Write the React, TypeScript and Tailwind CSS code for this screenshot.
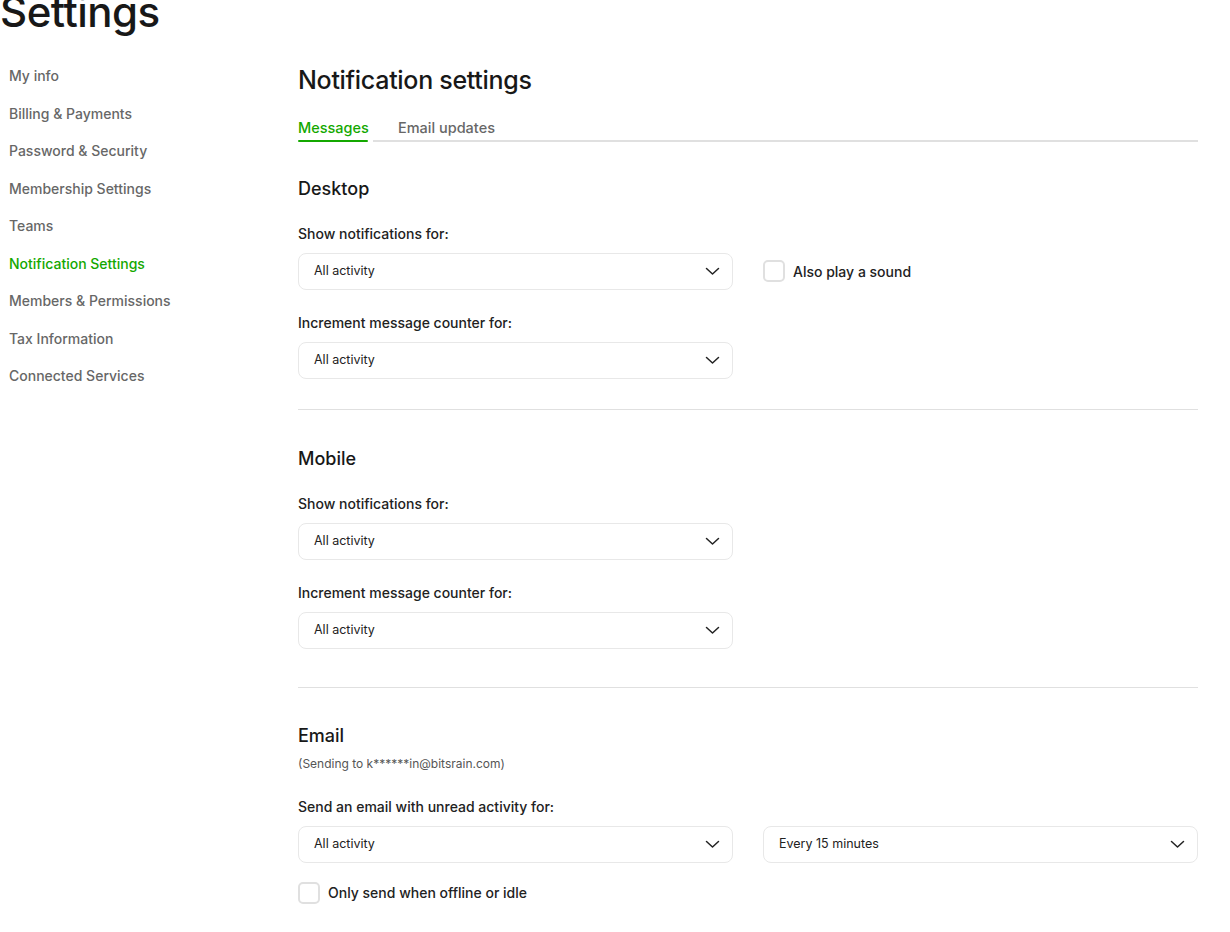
const NAV = [
    "My info",
    "Billing & Payments",
    "Password & Security",
    "Membership Settings",
    "Teams",
    "Notification Settings",
    "Members & Permissions",
    "Tax Information",
    "Connected Services",
];

function Chevron() {
    return (
        <svg width="15" height="9" viewBox="0 0 15 9" fill="none" className="text-[#222]">
            <path d="M1.5 1.5 L7.5 7 L13.5 1.5" stroke="currentColor" strokeWidth="1.5" strokeLinecap="round" strokeLinejoin="round" />
        </svg>
    );
}

function Select({ value, className = "" }: { value: string; className?: string }) {
    return (
        <div className={`flex h-[37px] items-center justify-between rounded-lg border border-[#e8e8e8] bg-white pl-[15px] pr-[12px] ${className}`}>
            <span className="text-[12.5px] text-[#222]">{value}</span>
            <Chevron />
        </div>
    );
}

function Checkbox({ label }: { label: string }) {
    return (
        <label className="flex items-center gap-2">
            <span className="h-[22px] w-[22px] rounded-[5px] border-2 border-[#e0e0e0] bg-white" />
            <span className="text-[14px] font-medium text-[#222]">{label}</span>
        </label>
    );
}

function Field({ label, children }: { label: string; children: React.ReactNode }) {
    return (
        <div className="flex flex-col">
            <p className="mb-[9px] text-[14px] font-medium text-[#222]">{label}</p>
            {children}
        </div>
    );
}

export default function App() {
    return (
        <div className="min-h-screen bg-white text-[#222]" style={{ fontFamily: "Inter, 'Noto Sans', sans-serif" }}>
            <h1 className="-mt-[9px] text-[42px] font-medium leading-none tracking-[-0.5px] text-[#181818]">Settings</h1>
            <div className="mt-[31px] flex">
                <nav className="flex w-[298px] shrink-0 flex-col gap-[16px] pl-[9px] pt-[1px]">
                    {NAV.map((n) => (
                        <a
                            key={n}
                            className={`text-[14px] font-medium leading-[21.5px] ${n === "Notification Settings" ? "text-[#14a800]" : "text-[#676767]"}`}
                        >
                            {n}
                        </a>
                    ))}
                </nav>
                <main className="w-[900px] pb-10">
                    <h2 className="text-[25px] font-medium leading-[32px] tracking-[-0.3px] text-[#181818]">Notification settings</h2>
                    <div className="mt-[21px] flex items-end gap-[4px]">
                        <div className="flex flex-col">
                            <span className="pb-[1px] text-[14.5px] font-medium text-[#14a800]">Messages</span>
                            <span className="h-[2px] w-[70px] rounded bg-[#14a800]" />
                        </div>
                        <div className="flex flex-1 flex-col">
                            <span className="pb-[1px] pl-[25px] text-[14.5px] font-medium text-[#676767]">Email updates</span>
                            <span className="h-[2px] w-full bg-[#e0e0e0]" />
                        </div>
                    </div>

                    <section className="mt-[35px] flex flex-col">
                        <h3 className="text-[18px] font-medium leading-[24px] text-[#181818]">Desktop</h3>
                        <div className="mt-[22px]">
                            <Field label="Show notifications for:">
                                <div className="flex items-center gap-[30px]">
                                    <Select value="All activity" className="w-[435px]" />
                                    <Checkbox label="Also play a sound" />
                                </div>
                            </Field>
                        </div>
                        <div className="mt-[22px]">
                            <Field label="Increment message counter for:">
                                <Select value="All activity" className="w-[435px]" />
                            </Field>
                        </div>
                    </section>

                    <hr className="mt-[30px] border-t border-[#e0e0e0]" />

                    <section className="mt-[37px] flex flex-col">
                        <h3 className="text-[18px] font-medium leading-[24px] text-[#181818]">Mobile</h3>
                        <div className="mt-[22px]">
                            <Field label="Show notifications for:">
                                <Select value="All activity" className="w-[435px]" />
                            </Field>
                        </div>
                        <div className="mt-[22px]">
                            <Field label="Increment message counter for:">
                                <Select value="All activity" className="w-[435px]" />
                            </Field>
                        </div>
                    </section>

                    <hr className="mt-[38px] border-t border-[#e0e0e0]" />

                    <section className="mt-[36px] flex flex-col">
                        <h3 className="text-[18px] font-medium leading-[24px] text-[#181818]">Email</h3>
                        <p className="mt-[7px] text-[12px] text-[#555]">(Sending to k******in@bitsrain.com)</p>
                        <div className="mt-[23px]">
                            <Field label="Send an email with unread activity for:">
                                <div className="flex items-center gap-[30px]">
                                    <Select value="All activity" className="w-[435px]" />
                                    <Select value="Every 15 minutes" className="w-[435px]" />
                                </div>
                            </Field>
                        </div>
                        <div className="mt-[19px]">
                            <Checkbox label="Only send when offline or idle" />
                        </div>
                    </section>
                </main>
            </div>
        </div>
    );
}
